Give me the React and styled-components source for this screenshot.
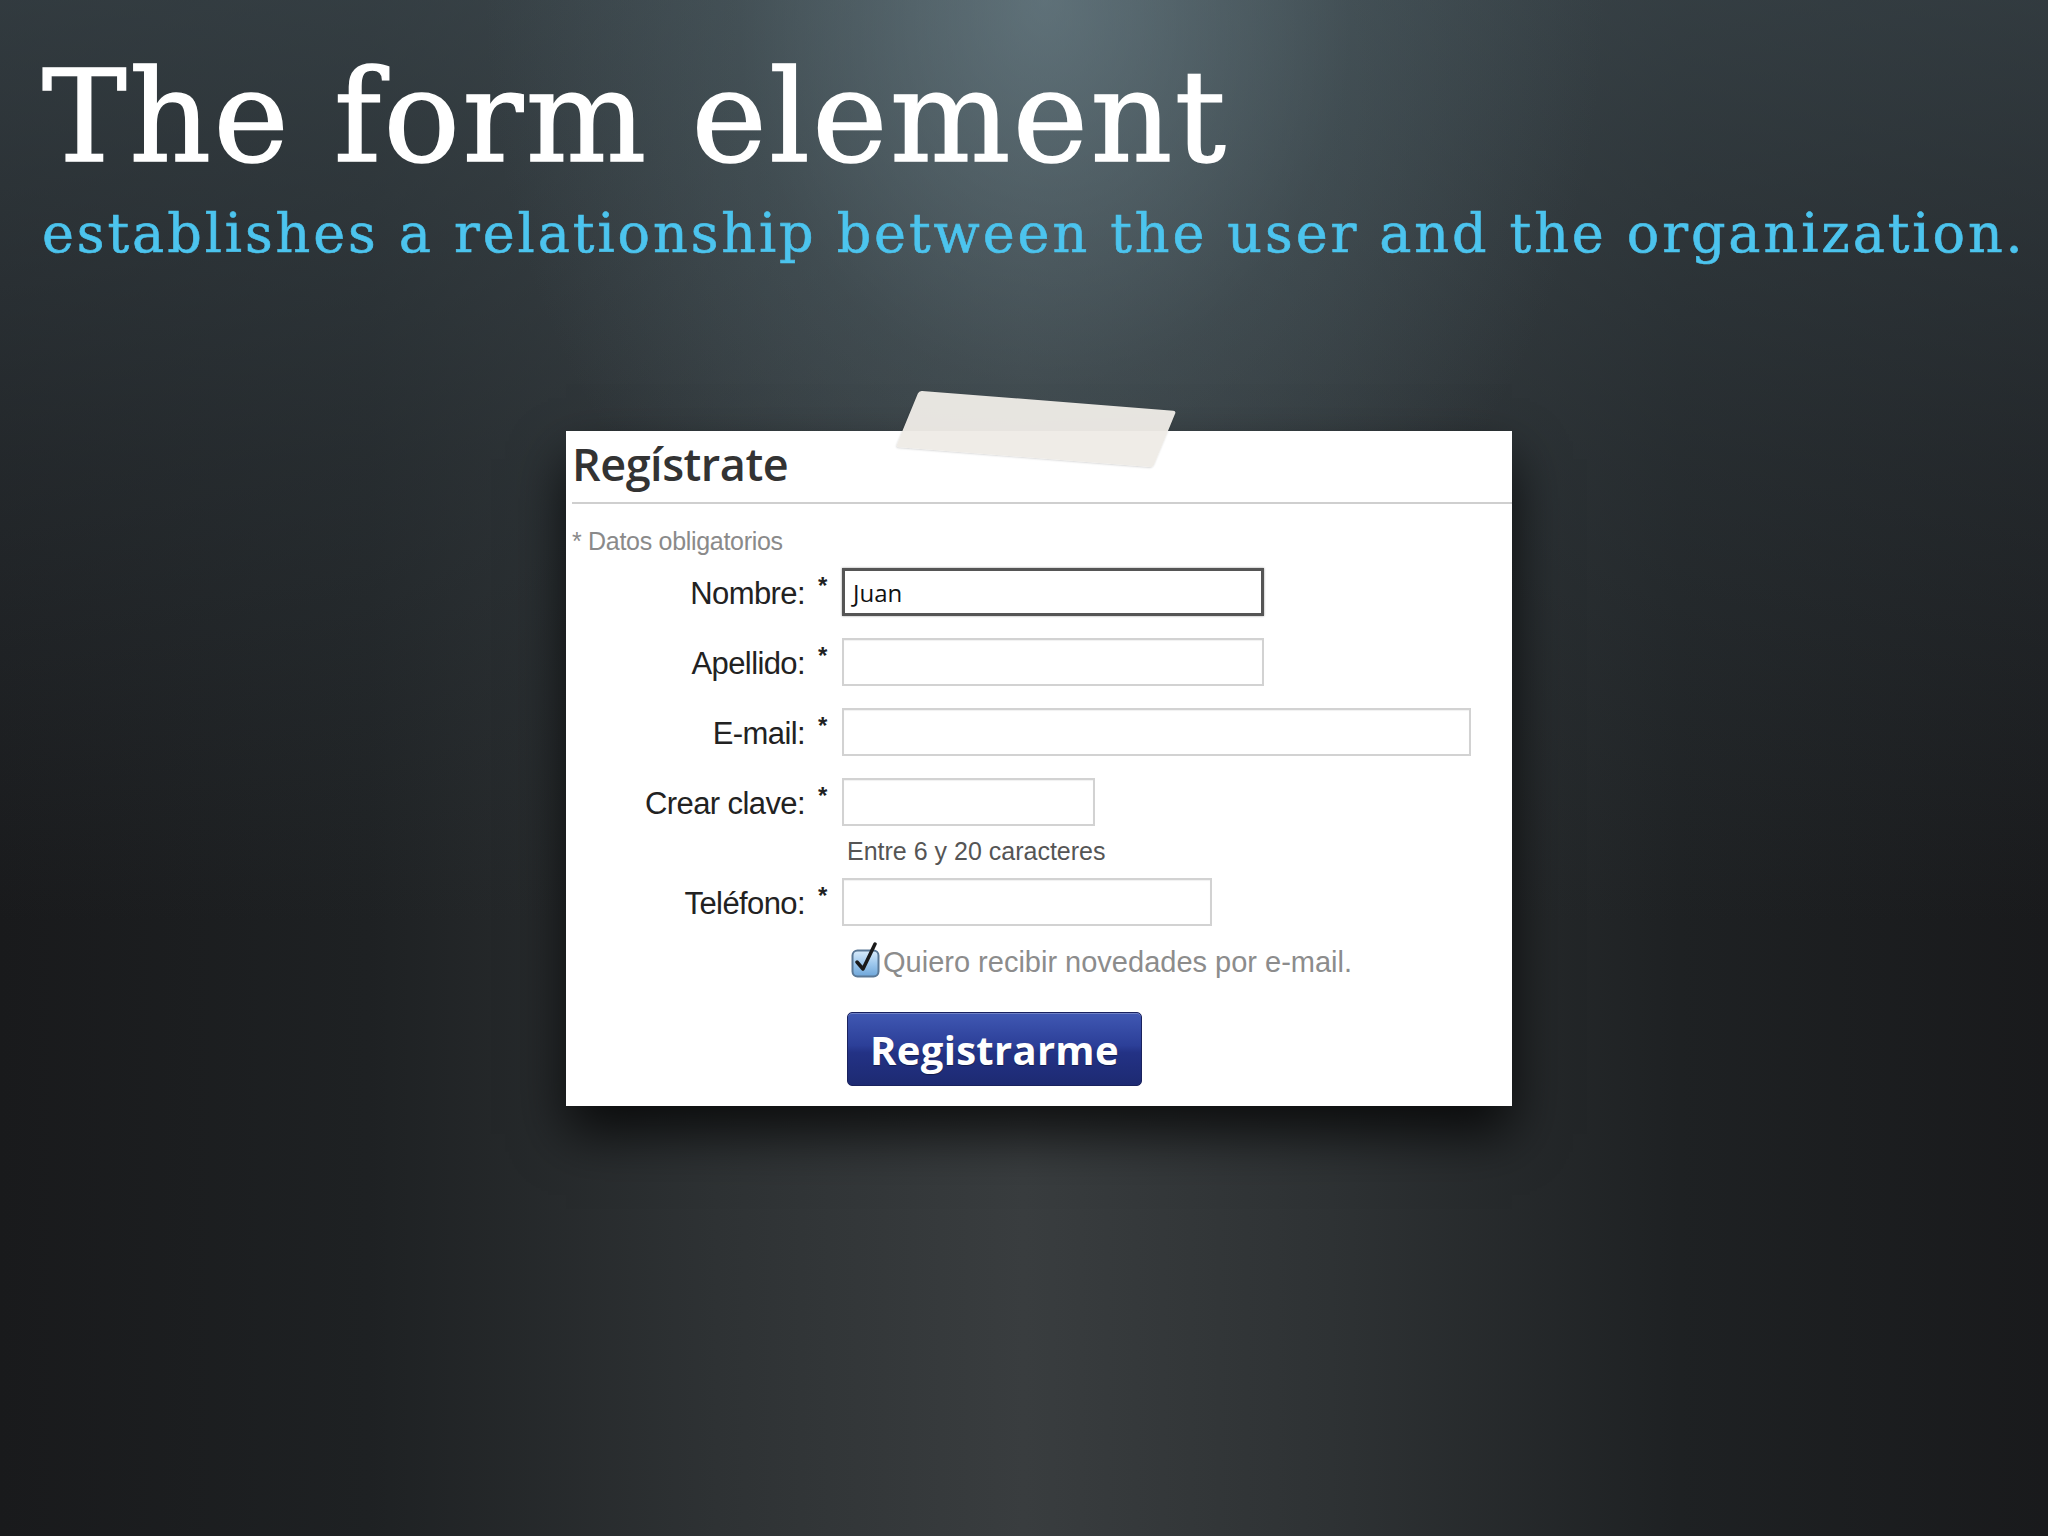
import styled, { createGlobalStyle } from "styled-components"

const GlobalStyle = createGlobalStyle`
  html, body {
    margin: 0;
    padding: 0;
  }
  body {
    background: #1b1d1f;
  }
`

const fields = [
  { label: "Nombre:", width: 422, value: "Juan", focused: true },
  { label: "Apellido:", width: 422 },
  { label: "E-mail:", width: 629 },
  { label: "Crear clave:", width: 253, hint: "Entre 6 y 20 caracteres" },
  { label: "Teléfono:", width: 370 },
]

const Check = () => (
  <svg width="30" height="36" viewBox="0 0 30 36">
    <defs>
      <linearGradient id="cb" x1="0" y1="0" x2="0" y2="1">
        <stop offset="0" stopColor="#d9ecfb" />
        <stop offset="0.5" stopColor="#9fc9ee" />
        <stop offset="1" stopColor="#6ea6d9" />
      </linearGradient>
    </defs>
    <rect x="1.5" y="8.5" width="26" height="26" rx="5" fill="url(#cb)" stroke="#5a7896" strokeWidth="2" />
    <path d="M6 20 L12 27 L24 2" fill="none" stroke="#1a1a1a" strokeWidth="3.5" strokeLinecap="round" strokeLinejoin="round" />
  </svg>
)

const App = () => {
  return (
    <>
      <GlobalStyle />
      <Slide>
        <Header>
          <Title>The form element</Title>
          <Subtitle>
            establishes a relationship between the user and the organization.
          </Subtitle>
        </Header>

        {/* screenshot of the form, taped to the slide */}
        <Stage>
          <Card>
            <Tape />
            <Heading>Regístrate</Heading>
            <Required>* Datos obligatorios</Required>
            <Rows>
              {fields.map((f) => (
                <Row key={f.label}>
                  <Label>{f.label}</Label>
                  <Star>*</Star>
                  <Field>
                    <Input $width={f.width} $focused={f.focused}>
                      {f.value}
                    </Input>
                    {f.hint && <Hint>{f.hint}</Hint>}
                  </Field>
                </Row>
              ))}
            </Rows>
            <Opt>
              <Check />
              <span>Quiero recibir novedades por e-mail.</span>
            </Opt>
            <Submit>Registrarme</Submit>
          </Card>
        </Stage>
      </Slide>
    </>
  )
}

const Slide = styled.div`
  width: 2048px;
  height: 1536px;
  overflow: hidden;
  background:
    radial-gradient(ellipse 560px 700px at 51% 0%, rgba(120, 145, 155, 0.55), rgba(90, 112, 120, 0.25) 55%, rgba(0, 0, 0, 0) 100%),
    linear-gradient(180deg, rgba(70, 85, 92, 0.55) 0%, rgba(55, 66, 72, 0.35) 30%, rgba(0, 0, 0, 0) 60%),
    linear-gradient(90deg, #191a1c 0%, #1e2123 18%, #2e3234 35%, #393d3f 50%, #2e3234 65%, #1e2123 82%, #191a1c 100%);
`

const Header = styled.header`
  padding: 53px 0 0 42px;
`

const Title = styled.h1`
  margin: 0;
  font-family: "DejaVu Serif", "Liberation Serif", serif;
  font-weight: 400;
  font-size: 127px;
  line-height: 128px;
  color: #ffffff;
  letter-spacing: 2.5px;
  -webkit-text-stroke: 1.5px #ffffff;
`

const Subtitle = styled.p`
  margin: 26px 0 0;
  font-family: "DejaVu Serif", "Liberation Serif", serif;
  font-size: 54px;
  line-height: 54px;
  color: #4cc4ee;
  letter-spacing: 2.9px;
  white-space: nowrap;
  -webkit-text-stroke: 0.6px #4cc4ee;
`

const Stage = styled.div`
  padding: 170px 0 0 566px;
`

const Card = styled.div`
  position: relative;
  width: 946px;
  box-sizing: border-box;
  padding: 10px 0 20px 6px;
  background: #ffffff;
  box-shadow: 0 28px 50px rgba(0, 0, 0, 0.75);
  font-family: "Liberation Sans", Arial, sans-serif;
`

const Tape = styled.div`
  position: absolute;
  left: 341px;
  top: -31px;
  width: 258px;
  height: 58px;
  background: rgba(238, 235, 230, 0.96);
  transform: rotate(4.5deg) skewX(-18deg);
  border-radius: 3px;
  box-shadow: 0 1px 2px rgba(0, 0, 0, 0.15);
`

const Heading = styled.h2`
  margin: 0;
  padding-bottom: 16px;
  border-bottom: 2px solid #cfcfcf;
  font-family: "Open Sans", sans-serif;
  font-weight: 600;
  font-size: 45px;
  line-height: 45px;
  color: #333333;
  letter-spacing: -0.5px;
`

const Required = styled.div`
  margin-top: 25px;
  font-size: 25px;
  line-height: 24px;
  color: #8a8a8a;
  letter-spacing: -0.3px;
`

const Rows = styled.div`
  display: flex;
  flex-direction: column;
  gap: 22px;
  margin-top: 15px;
`

const Row = styled.div`
  display: grid;
  grid-template-columns: 233px 37px auto;
  align-items: start;
`

const Label = styled.div`
  height: 48px;
  display: flex;
  align-items: center;
  justify-content: flex-end;
  padding-top: 4px;
  box-sizing: border-box;
  font-size: 31px;
  color: #222222;
  letter-spacing: -0.6px;
`

const Star = styled.div`
  padding: 8px 0 0 13px;
  font-size: 24px;
  line-height: 20px;
  font-weight: 700;
  color: #222222;
`

const Field = styled.div`
  display: flex;
  flex-direction: column;
`

const Input = styled.div`
  width: ${(p) => p.$width}px;
  height: 48px;
  box-sizing: border-box;
  border: ${(p) => (p.$focused ? "3px solid #555555" : "2px solid #d2d2d2")};
  box-shadow: ${(p) => (p.$focused ? "0 0 2px rgba(0,0,0,0.4)" : "inset 0 1px 1px rgba(0,0,0,0.06)")};
  padding: 0 0 0 8px;
  display: flex;
  align-items: center;
  font-family: "Open Sans", sans-serif;
  font-size: 24px;
  color: #111111;
`

const Hint = styled.div`
  margin: 14px 0 -6px 5px;
  font-size: 25px;
  line-height: 22px;
  color: #555555;
  letter-spacing: 0;
`

const Opt = styled.label`
  display: flex;
  align-items: flex-end;
  gap: 2px;
  margin: 16px 0 0 279px;
  font-size: 29px;
  line-height: 28px;
  color: #8c8c8c;
  letter-spacing: 0;

  span {
    padding-bottom: 2px;
  }
`

const Submit = styled.button`
  display: block;
  margin: 34px 0 0 275px;
  width: 295px;
  height: 74px;
  border: 1px solid #1a225e;
  border-radius: 5px;
  background: linear-gradient(180deg, #4058b3 0%, #2c3f98 45%, #233285 55%, #1d2a72 100%);
  box-shadow: inset 0 1px 0 rgba(255, 255, 255, 0.25);
  font-family: "Open Sans", sans-serif;
  font-weight: 700;
  font-size: 40px;
  color: #ffffff;
  letter-spacing: 0.3px;
  text-shadow: 0 1px 1px rgba(0, 0, 0, 0.4);
  cursor: pointer;
`

export default App
